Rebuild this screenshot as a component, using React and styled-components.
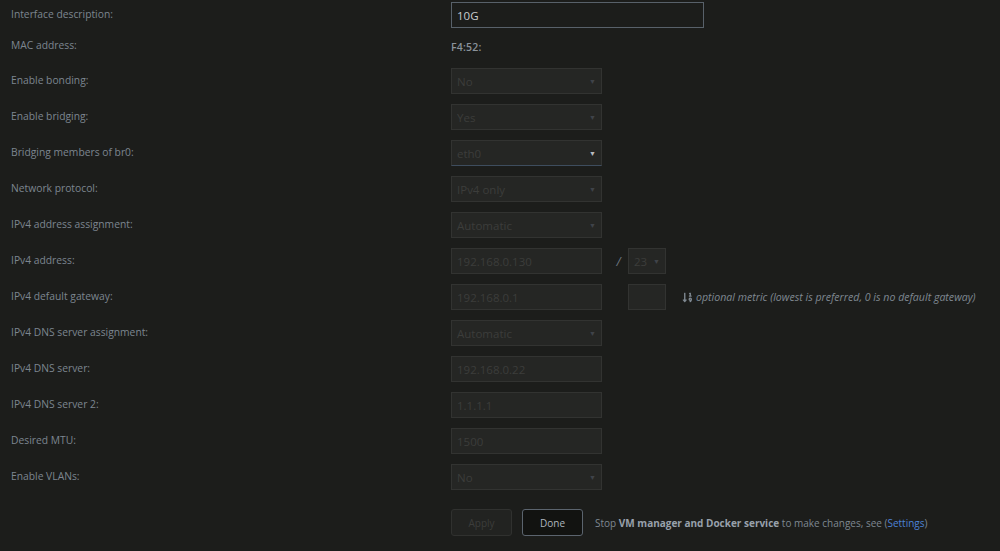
import styled, { createGlobalStyle } from "styled-components";
import { FaSortNumericDown } from "react-icons/fa";

const GlobalStyle = createGlobalStyle`
  html, body {
    margin: 0;
    padding: 0;
    background: #1c1d1b;
  }
  body {
    font-family: "Open Sans", "Noto Sans", sans-serif;
    font-size: 10px;
    color: #818a93;
  }
`;

const Page = styled.div`
  width: 1000px;
  height: 551px;
  overflow: hidden;
  background: #1c1d1b;
`;

const Row = styled.div`
  display: flex;
  align-items: center;
  height: ${(p) => p.$h || 36}px;
`;

const Label = styled.div`
  width: 440px;
  padding-left: 11px;
  padding-bottom: 3px;
  font-size: 10.3px;
  color: #7d8690;
`;

const Field = styled.div`
  display: flex;
  align-items: center;
`;

const TextInput = styled.div`
  box-sizing: border-box;
  width: ${(p) => p.$w || 151}px;
  height: 26px;
  padding: 0 5px;
  display: flex;
  align-items: center;
  font-size: 11.5px;
  background: ${(p) => (p.$active ? "#1c1d1b" : "#252624")};
  border: 1px solid ${(p) => (p.$active ? "#58616a" : "#323331")};
  color: ${(p) => (p.$active ? "#c9ccce" : "#3c3d3b")};
`;

const Select = styled(TextInput)`
  position: relative;
  border-bottom-color: ${(p) => (p.$focus ? "#3e4d5e" : "#323331")};
  &::after {
    content: "▼";
    position: absolute;
    right: 5px;
    top: 8px;
    font-size: 7px;
    color: ${(p) => (p.$focus ? "#b8bcc0" : "#3f4349")};
  }
`;

const Mac = styled.div`
  color: #8a929a;
  font-size: 10.5px;
  font-weight: 600;
  letter-spacing: 0.2px;
`;

const Slash = styled.span`
  box-sizing: border-box;
  width: 26px;
  padding-left: 7px;
  text-align: center;
  color: #6e7780;
  font-size: 12px;
  font-style: italic;
`;

const Hint = styled.span`
  display: flex;
  align-items: center;
  gap: 3px;
  margin-left: 16px;
  font-size: 10.6px;
  font-style: italic;
  color: #7f8891;
  svg {
    color: #7f8891;
    font-size: 11px;
  }
`;

const ButtonRow = styled.div`
  display: flex;
  align-items: center;
  margin-top: 14px;
  padding-left: 451px;
  gap: 10px;
`;

const Button = styled.div`
  box-sizing: border-box;
  width: 61px;
  height: 27px;
  border-radius: 3px;
  display: flex;
  align-items: center;
  justify-content: center;
  background: ${(p) => (p.$primary ? "#121311" : "#222321")};
  border: 1px solid ${(p) => (p.$primary ? "#5b646e" : "#30312f")};
  color: ${(p) => (p.$primary ? "#aeb6be" : "#3c3d3b")};
`;

const Note = styled.span`
  margin-left: 2px;
  color: #7f8891;
  b {
    color: #98a1ab;
    font-weight: 700;
  }
  a {
    color: #4c82d6;
    text-decoration: none;
  }
`;

const rows = [
  { label: "Enable bonding:", kind: "select", value: "No" },
  { label: "Enable bridging:", kind: "select", value: "Yes" },
  { label: "Bridging members of br0:", kind: "select", value: "eth0", focus: true },
  { label: "Network protocol:", kind: "select", value: "IPv4 only" },
  { label: "IPv4 address assignment:", kind: "select", value: "Automatic" },
  { label: "IPv4 address:", kind: "address", value: "192.168.0.130" },
  { label: "IPv4 default gateway:", kind: "gateway", value: "192.168.0.1" },
  { label: "IPv4 DNS server assignment:", kind: "select", value: "Automatic" },
  { label: "IPv4 DNS server:", kind: "input", value: "192.168.0.22" },
  { label: "IPv4 DNS server 2:", kind: "input", value: "1.1.1.1" },
  { label: "Desired MTU:", kind: "input", value: "1500" },
  { label: "Enable VLANs:", kind: "select", value: "No" },
];

function Control({ row }) {
  if (row.kind === "select")
    return <Select $focus={row.focus}>{row.value}</Select>;
  if (row.kind === "input") return <TextInput>{row.value}</TextInput>;
  if (row.kind === "address")
    return (
      <Field>
        <TextInput>{row.value}</TextInput>
        <Slash>/</Slash>
        <Select $w={38}>23</Select>
      </Field>
    );
  return (
    <Field>
      <TextInput>{row.value}</TextInput>
      <Slash />
      <TextInput $w={38} />
      <Hint>
        <FaSortNumericDown />
        optional metric (lowest is preferred, 0 is no default gateway)
      </Hint>
    </Field>
  );
}

export default function App() {
  return (
    <Page>
      <GlobalStyle />
      <Row $h={30}>
        <Label>Interface description:</Label>
        <TextInput $active $w={253}>10G</TextInput>
      </Row>
      <Row $h={33}>
        <Label>MAC address:</Label>
        <Mac>F4:52:</Mac>
      </Row>
      {rows.map((r) => (
        <Row key={r.label}>
          <Label>{r.label}</Label>
          <Control row={r} />
        </Row>
      ))}
      <ButtonRow>
        <Button>Apply</Button>
        <Button $primary>Done</Button>
        <Note>
          Stop <b>VM manager and Docker service</b> to make changes, see (
          <a href="#">Settings</a>)
        </Note>
      </ButtonRow>
    </Page>
  );
}
